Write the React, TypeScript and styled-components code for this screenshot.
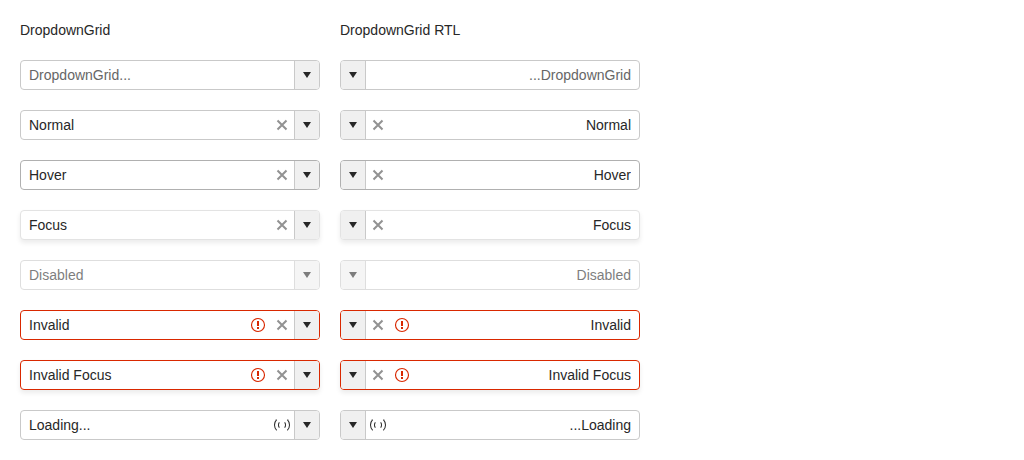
import React from "react";
import styled, { createGlobalStyle, css } from "styled-components";

type FieldState = "normal" | "hover" | "focus" | "disabled" | "invalid" | "invalidFocus";
type Direction = "ltr" | "rtl";

interface FieldData {
  id: string;
  label: string;
  value?: string;
  placeholder?: string;
  state: FieldState;
  clearable?: boolean;
  loading?: boolean;
}

const fields: FieldData[] = [
  { id: "empty", label: "Empty", placeholder: "DropdownGrid...", state: "normal" },
  { id: "normal", label: "Normal", value: "Normal", state: "normal", clearable: true },
  { id: "hover", label: "Hover", value: "Hover", state: "hover", clearable: true },
  { id: "focus", label: "Focus", value: "Focus", state: "focus", clearable: true },
  { id: "disabled", label: "Disabled", value: "Disabled", state: "disabled" },
  { id: "invalid", label: "Invalid", value: "Invalid", state: "invalid", clearable: true },
  { id: "invalid-focus", label: "Invalid focus", value: "Invalid Focus", state: "invalidFocus", clearable: true },
  { id: "loading", label: "Loading", value: "Loading...", state: "normal", loading: true },
];

const borderColors: Record<FieldState, string> = {
  normal: "#c9c9c9",
  hover: "#b0b0b0",
  focus: "#e3e3e3",
  disabled: "#c9c9c9",
  invalid: "#d92800",
  invalidFocus: "#d92800",
};

const GlobalStyle = createGlobalStyle`
  *, *::before, *::after {
    box-sizing: border-box;
  }
  body {
    margin: 0;
    background: #ffffff;
    color: #272727;
    font-family: "Liberation Sans", Arial, sans-serif;
    font-size: 14px;
    line-height: 20px;
  }
`;

const Page = styled.main`
  display: grid;
  grid-template-columns: repeat(2, minmax(0, 300px));
  gap: 20px;
  padding: 20px;
`;

const Column = styled.section`
  display: flex;
  flex-direction: column;
  gap: 20px;
`;

const Title = styled.h2`
  margin: 0;
  font-size: 14px;
  font-weight: 400;
`;

const Picker = styled.div<{ $state: FieldState }>`
  display: flex;
  height: 30px;
  overflow: hidden;
  border: 1px solid ${({ $state }) => borderColors[$state]};
  border-radius: 4px;
  background: #ffffff;
  ${({ $state }) =>
    ($state === "focus" || $state === "invalidFocus") &&
    css`
      box-shadow: 0 3px 5px rgba(0, 0, 0, 0.08);
    `}
  ${({ $state }) =>
    $state === "disabled" &&
    css`
      opacity: 0.6;
    `}
`;

const TextInput = styled.input`
  flex: 1;
  min-width: 0;
  padding: 4px 8px;
  border: 0;
  outline: 0;
  background: transparent;
  color: inherit;
  font: inherit;

  &::placeholder {
    color: #666666;
    opacity: 1;
  }
`;

const StatusIcon = styled.span<{ $invalid?: boolean }>`
  display: flex;
  align-items: center;
  padding: 0 4px;
  color: ${({ $invalid }) => ($invalid ? "#d92800" : "inherit")};
`;

const ClearButton = styled.button`
  display: flex;
  align-items: center;
  padding: 0 4px;
  border: 0;
  background: transparent;
  color: inherit;
  cursor: pointer;
  opacity: 0.5;
`;

const ToggleButton = styled.button`
  display: flex;
  align-items: center;
  padding: 0 4px;
  border: 0 solid #c9c9c9;
  border-inline-start-width: 1px;
  background: #f0f0f0;
  color: inherit;
  cursor: pointer;
`;

const Glyph = styled.svg`
  display: block;
  width: 16px;
  height: 16px;
  fill: currentColor;
`;

const Spinner = styled.span`
  display: grid;
  place-items: center;
  width: 16px;
  height: 16px;

  &::before,
  &::after {
    content: "";
    grid-area: 1 / 1;
    border: 1px solid;
    border-color: transparent currentColor;
    border-radius: 50%;
  }
  &::before {
    width: 16px;
    height: 16px;
  }
  &::after {
    width: 8px;
    height: 8px;
  }
`;

const DropdownGrid = ({ field, dir }: { field: FieldData; dir: Direction }) => {
  const disabled = field.state === "disabled";
  const invalid = field.state === "invalid" || field.state === "invalidFocus";
  return (
    <Picker $state={field.state}>
      <TextInput
        id={`${dir}-${field.id}`}
        aria-label={field.label}
        aria-invalid={invalid}
        defaultValue={field.value}
        placeholder={field.placeholder}
        disabled={disabled}
      />
      {invalid && (
        <StatusIcon $invalid>
          <Glyph viewBox="0 0 16 16" aria-hidden="true">
            <circle cx="8" cy="8" r="6.5" fill="none" stroke="currentColor" strokeWidth="1.15" />
            <path d="M7 4h2v5H7zM7 10h2v2H7z" />
          </Glyph>
        </StatusIcon>
      )}
      {field.clearable && (
        <ClearButton type="button" aria-label="Clear">
          <Glyph viewBox="0 0 16 16" aria-hidden="true">
            <path d="M3.5 3.5l9 9M12.5 3.5l-9 9" fill="none" stroke="currentColor" strokeWidth="2" />
          </Glyph>
        </ClearButton>
      )}
      {field.loading && (
        <StatusIcon>
          <Spinner role="status" aria-label="Loading" />
        </StatusIcon>
      )}
      <ToggleButton type="button" aria-label="Open list" disabled={disabled}>
        <Glyph viewBox="0 0 16 16" aria-hidden="true">
          <path d="M4 5h8l-4 6z" />
        </Glyph>
      </ToggleButton>
    </Picker>
  );
};

const FieldColumn = ({ title, dir }: { title: string; dir: Direction }) => (
  <Column>
    <Title>{title}</Title>
    {fields.map((field) => (
      <div key={field.id} dir={dir}>
        <DropdownGrid field={field} dir={dir} />
      </div>
    ))}
  </Column>
);

export default function App() {
  return (
    <>
      <GlobalStyle />
      <Page>
        <FieldColumn title="DropdownGrid" dir="ltr" />
        <FieldColumn title="DropdownGrid RTL" dir="rtl" />
      </Page>
    </>
  );
}
